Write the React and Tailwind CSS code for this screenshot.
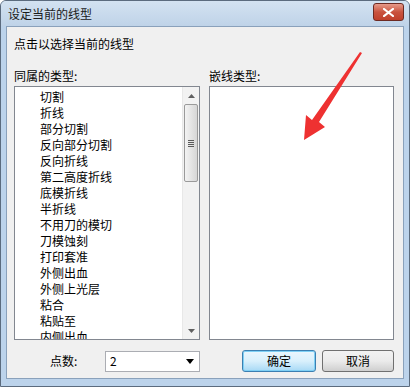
import React from 'react';

const items = [
  '切割', '折线', '部分切割', '反向部分切割', '反向折线', '第二高度折线', '底模折线',
  '半折线', '不用刀的模切', '刀模蚀刻', '打印套准', '外侧出血', '外侧上光层', '粘合', '粘贴至', '内侧出血',
];

const font = { fontFamily: '"Noto Sans CJK SC", "Liberation Sans", sans-serif' };

function ScrollBar() {
  return (
    <div className="w-[17px] h-full flex flex-col bg-[#f2f2f2] border-l border-[#e8e8e8]">
      <div className="h-[17px] flex items-center justify-center">
        <svg width="7" height="4" viewBox="0 0 7 4"><path d="M0 4 L3.5 0 L7 4 Z" fill="#606060" /></svg>
      </div>
      <div className="mx-[1px] h-[78px] rounded-[2px] border border-[#9a9a9a] bg-gradient-to-r from-[#f3f3f3] to-[#d6d6d6] flex items-center justify-center">
        <div className="flex flex-col gap-[1px]">
          <div className="w-[6px] h-[1px] bg-[#5a5a5a]" />
          <div className="w-[6px] h-[1px] bg-[#5a5a5a]" />
          <div className="w-[6px] h-[1px] bg-[#5a5a5a]" />
          <div className="w-[6px] h-[1px] bg-[#5a5a5a]" />
        </div>
      </div>
      <div className="flex-1" />
      <div className="h-[17px] flex items-center justify-center">
        <svg width="7" height="4" viewBox="0 0 7 4"><path d="M0 0 L3.5 4 L7 0 Z" fill="#606060" /></svg>
      </div>
    </div>
  );
}

export default function App() {
  return (
    <div className="relative w-[410px] h-[387px] flex flex-col bg-[#bcd3eb] border border-[#5b6b7e] rounded-t-[6px] overflow-hidden text-[12px] text-black" style={font}>
      {/* title bar */}
      <div className="h-[25px] flex items-center justify-between pl-[7px] pr-[5px] bg-gradient-to-b from-[#d3e2f1] to-[#bfd3e8]">
        <span className="text-[12px] text-[#1a1a1a]">设定当前的线型</span>
        <div className="w-[31px] h-[18px] -mt-[3px] rounded-[3px] border border-[#6d2a22] bg-gradient-to-b from-[#e69a8a] via-[#c9533f] to-[#c0402c] flex items-center justify-center">
          <svg width="11" height="9" viewBox="0 0 11 9">
            <path d="M1 1 L10 8 M10 1 L1 8" stroke="#fff" strokeWidth="2.2" strokeLinecap="square" />
          </svg>
        </div>
      </div>

      {/* client area */}
      <div className="mx-[5px] flex-1 bg-[#f0f0f0] border border-[#8aa1bb] flex flex-col pl-[7px] pr-[9px]">
        <div className="h-[37px] flex items-center pb-[3px]">点击以选择当前的线型</div>
        <div className="flex gap-[9px]">
          <div className="w-[186px] flex flex-col">
            <div className="h-[22px] flex items-center pt-[2px]">同属的类型:</div>
            <div className="h-[254px] bg-white border border-[#828790] flex overflow-hidden">
              <div className="flex-1 pl-[25px] pt-[2px] overflow-hidden">
                {items.map((t) => (
                  <div key={t} className="h-[16px] leading-[16px] whitespace-nowrap">{t}</div>
                ))}
              </div>
              <ScrollBar />
            </div>
          </div>
          <div className="flex-1 flex flex-col">
            <div className="h-[22px] flex items-center pt-[2px]">嵌线类型:</div>
            <div className="h-[254px] bg-white border border-[#828790]" />
          </div>
        </div>

        {/* bottom row */}
        <div className="flex items-center mt-[10px]">
          <span className="ml-[36px] w-[55px]">点数:</span>
          <div className="w-[95px] h-[21px] bg-white border border-[#abadb3] flex items-center justify-between pl-[4px] pr-[5px]">
            <span>2</span>
            <svg width="8" height="5" viewBox="0 0 8 5"><path d="M0 0 L4 5 L8 0 Z" fill="#000" /></svg>
          </div>
          <div className="flex-1" />
          <button className="w-[74px] h-[22px] rounded-[3px] border border-[#3c7fb1] bg-gradient-to-b from-[#eaf6fd] via-[#d9f0fc] to-[#a7d9f5] shadow-[inset_0_0_0_1px_#7fd0f5] flex items-center justify-center">确定</button>
          <button className="ml-[6px] w-[72px] h-[22px] rounded-[3px] border border-[#707070] bg-gradient-to-b from-[#f2f2f2] via-[#ebebeb] to-[#cfcfcf] flex items-center justify-center">取消</button>
        </div>
      </div>
      <div className="h-[7px]" />

      {/* red annotation arrow */}
      <svg className="absolute left-0 top-0 pointer-events-none" width="410" height="387" viewBox="0 0 410 387">
        <path d="M361 52 L318 121 L324 126 L303 139 L305 114 L311 119 L359 51 Z" fill="#ee3131" />
      </svg>
    </div>
  );
}
